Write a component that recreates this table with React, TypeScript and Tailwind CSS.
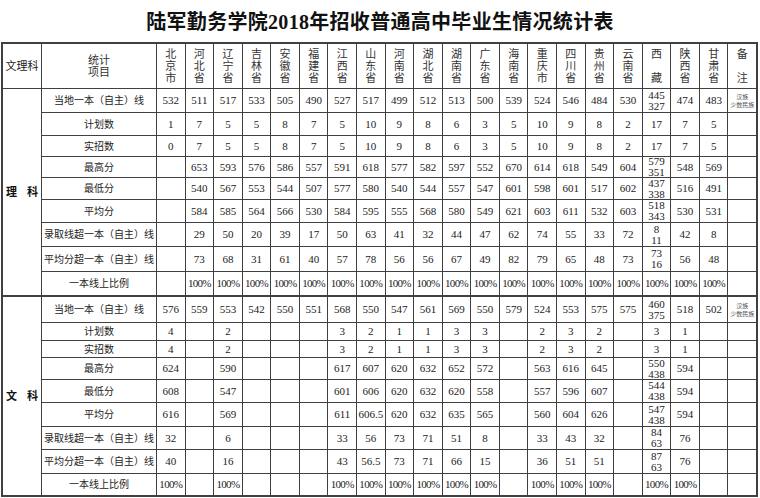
const provinces = [
  '北京市', '河北省', '辽宁省', '吉林省', '安徽省', '福建省', '江西省', '山东省', '河南省', '湖北省',
  '湖南省', '广东省', '海南省', '重庆市', '四川省', '贵州省', '云南省', '西\u3000藏', '陕西省', '甘肃省',
];

type Row = { label: string; values: string[]; note?: boolean };

const full = Array(20).fill('100%');

const science: Row[] = [
  {
    label: '当地一本（自主）线',
    values: ['532', '511', '517', '533', '505', '490', '527', '517', '499', '512', '513', '500', '539', '524', '546', '484', '530', '445\n327', '474', '483'],
    note: true,
  },
  { label: '计划数', values: ['1', '7', '5', '5', '8', '7', '5', '10', '9', '8', '6', '3', '5', '10', '9', '8', '2', '17', '7', '5'] },
  { label: '实招数', values: ['0', '7', '5', '5', '8', '7', '5', '10', '9', '8', '6', '3', '5', '10', '9', '8', '2', '17', '7', '5'] },
  { label: '最高分', values: ['', '653', '593', '576', '586', '557', '591', '618', '577', '582', '597', '552', '670', '614', '618', '549', '604', '579\n351', '548', '569'] },
  { label: '最低分', values: ['', '540', '567', '553', '544', '507', '577', '580', '540', '544', '557', '547', '601', '598', '601', '517', '602', '437\n338', '516', '491'] },
  { label: '平均分', values: ['', '584', '585', '564', '566', '530', '584', '595', '555', '568', '580', '549', '621', '603', '611', '532', '603', '518\n343', '530', '531'] },
  { label: '录取线超一本（自主）线', values: ['', '29', '50', '20', '39', '17', '50', '63', '41', '32', '44', '47', '62', '74', '55', '33', '72', '8\n11', '42', '8'] },
  { label: '平均分超一本（自主）线', values: ['', '73', '68', '31', '61', '40', '57', '78', '56', '56', '67', '49', '82', '79', '65', '48', '73', '73\n16', '56', '48'] },
  { label: '一本线上比例', values: ['', ...full.slice(1)] },
];

const arts: Row[] = [
  {
    label: '当地一本（自主）线',
    values: ['576', '559', '553', '542', '550', '551', '568', '550', '547', '561', '569', '550', '579', '524', '553', '575', '575', '460\n375', '518', '502'],
    note: true,
  },
  { label: '计划数', values: ['4', '', '2', '', '', '', '3', '2', '1', '1', '3', '3', '', '2', '3', '2', '', '3', '1', ''] },
  { label: '实招数', values: ['4', '', '2', '', '', '', '3', '2', '1', '1', '3', '3', '', '2', '3', '2', '', '3', '1', ''] },
  { label: '最高分', values: ['624', '', '590', '', '', '', '617', '607', '620', '632', '652', '572', '', '563', '616', '645', '', '550\n438', '594', ''] },
  { label: '最低分', values: ['608', '', '547', '', '', '', '601', '606', '620', '632', '620', '558', '', '557', '596', '607', '', '544\n438', '594', ''] },
  { label: '平均分', values: ['616', '', '569', '', '', '', '611', '606.5', '620', '632', '635', '565', '', '560', '604', '626', '', '547\n438', '594', ''] },
  { label: '录取线超一本（自主）线', values: ['32', '', '6', '', '', '', '33', '56', '73', '71', '51', '8', '', '33', '43', '32', '', '84\n63', '76', ''] },
  { label: '平均分超一本（自主）线', values: ['40', '', '16', '', '', '', '43', '56.5', '73', '71', '66', '15', '', '36', '51', '51', '', '87\n63', '76', ''] },
  { label: '一本线上比例', values: ['100%', '', '100%', '', '', '', '100%', '100%', '100%', '100%', '100%', '100%', '', '100%', '100%', '100%', '', '100%', '100%', ''] },
];

const cell = 'flex items-center justify-center bg-white text-center';

function Section({ name, rows, divider }: { name: string; rows: Row[]; divider?: boolean }) {
  const top = divider ? 'border-t border-[#404040]' : '';
  return (
    <>
      <div className={`${cell} ${top} row-span-9 gap-[10px] text-[11px] font-bold text-[#111]`}>
        <span>{name[0]}</span>
        <span>{name[1]}</span>
      </div>
      {rows.map((row, i) => {
        const edge = i === 0 ? top : '';
        return (
          <div key={row.label} className="contents">
            <div className={`${cell} ${edge} text-[10px] text-[#222]`}>{row.label}</div>
            {row.values.map((v, j) => (
              <div
                key={j}
                className={`${cell} ${edge} whitespace-pre-line leading-[11px] text-[11px] text-[#222] ${
                  v === '100%' ? 'tracking-[-0.7px] text-[10px]' : ''
                }`}
              >
                {v}
              </div>
            ))}
            <div className={`${cell} ${edge} flex-col whitespace-nowrap text-[6px] leading-[8px] text-[#555]`}>
              {row.note && (
                <>
                  <span>汉族</span>
                  <span>少数民族</span>
                </>
              )}
            </div>
          </div>
        );
      })}
    </>
  );
}

export default function App() {
  return (
    <div className="w-[760px] h-[498px] overflow-hidden bg-white font-['Liberation_Serif','Noto_Sans_CJK_SC',serif]">
      <div className="h-[42px] pt-[2px] flex items-center justify-center text-[20px] font-bold text-[#111] tracking-[0.3px]">
        陆军勤务学院2018年招收普通高中毕业生情况统计表
      </div>

      <div className="ml-px w-[757px] grid gap-px bg-[#404040] border-2 border-[#404040] grid-cols-[38px_114px_repeat(21,minmax(0,1fr))] grid-rows-[44px_23px_22px_20px_20px_21px_22px_23px_24px_23px_26px_17px_16px_21px_22px_23px_22px_23px_21px]">
        <div className={`${cell} text-[11px] text-[#222]`}>文理科</div>
        <div className={`${cell} flex-col text-[11px] leading-[12px] text-[#333]`}>
          <span>统计</span>
          <span>项目</span>
        </div>
        {provinces.map((p) => (
          <div key={p} className={`${cell} flex-col text-[11px] leading-[12px] text-[#333]`}>
            {p.split('').map((c, k) => (
              <span key={k} className="h-[12px]">{c}</span>
            ))}
          </div>
        ))}
        <div className={`${cell} flex-col text-[11px] leading-[12px] text-[#333]`}>
          <span className="h-[12px]">备</span>
          <span className="h-[12px]">{'\u3000'}</span>
          <span className="h-[12px]">注</span>
        </div>

        <Section name="理科" rows={science} />
        <Section name="文科" rows={arts} divider />
      </div>
    </div>
  );
}
